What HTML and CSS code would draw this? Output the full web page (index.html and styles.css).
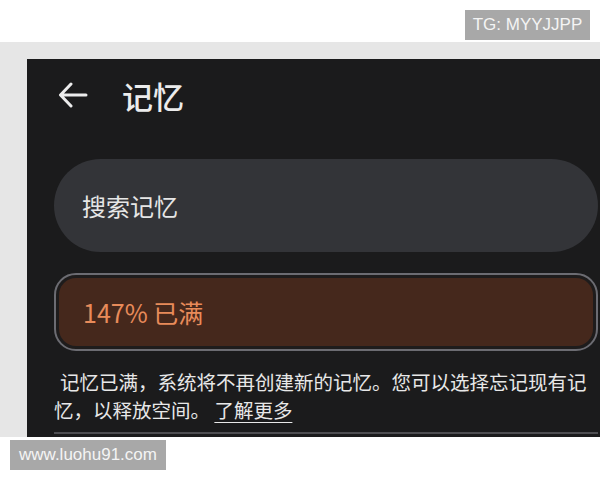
FILE: index.html
```html
<!DOCTYPE html>
<html lang="zh-CN">
<head>
    <meta charset="UTF-8">
    <meta name="viewport" content="width=device-width, initial-scale=1.0">
    <title>记忆</title>
    <link rel="stylesheet" href="styles.css">
</head>
<body>
    <div class="top-bar">
        <span class="tag">TG: MYYJJPP</span>
    </div>
    <div class="frame">
        <div class="screen">
            <div class="header">
                <svg class="back" width="30" height="26" viewBox="0 0 30 26">
                    <path d="M28 13H3M13 2L2.5 13L13 24" fill="none" stroke="#ececec" stroke-width="3" stroke-linecap="round" stroke-linejoin="round"/>
                </svg>
                <h1>记忆</h1>
            </div>
            <div class="search">搜索记忆</div>
            <div class="usage">
                <div class="usage-fill">147% 已满</div>
            </div>
            <p class="note">记忆已满，系统将不再创建新的记忆。您可以选择忘记现有记忆，以释放空间。 <a href="#">了解更多</a></p>
            <div class="divider"></div>
        </div>
    </div>
    <div class="bottom-bar">
        <span class="tag">www.luohu91.com</span>
    </div>
</body>
</html>
```

FILE: styles.css
```css
body {
    margin: 0;
    background: #fff;
    font-family: "Noto Sans CJK SC", "Noto Sans", sans-serif;
}
.top-bar {
    height: 42px;
    display: flex;
    justify-content: flex-end;
    align-items: center;
    padding-right: 10px;
}
.tag {
    background: #a8a8a8;
    color: #f4f4f4;
    font-family: "Liberation Sans", Arial, sans-serif;
    font-size: 17px;
    height: 30px;
    line-height: 30px;
    white-space: nowrap;
}
.top-bar .tag {
    margin-top: 8px;
    width: 125px;
    text-align: center;
}
.frame {
    background: #e6e6e6;
    padding: 17px 0 0 27px;
}
.screen {
    background: #1b1b1c;
    height: 378px;
    padding: 0 0 0 27px;
    box-sizing: border-box;
    overflow: hidden;
}
.header {
    height: 72px;
    display: flex;
    align-items: center;
}
.back {
    margin-left: 4px;
}
.header h1 {
    margin: 0 0 0 34px;
    color: #ececec;
    font-size: 31px;
    font-weight: 500;
}
.search {
    margin: 28px 2px 0 0;
    height: 93px;
    border-radius: 47px;
    background: #333438;
    color: #e6e6e6;
    font-size: 24px;
    display: flex;
    align-items: center;
    padding-left: 28px;
}
.usage {
    margin: 21px 2px 0 0;
    height: 78px;
    box-sizing: border-box;
    border: 2px solid #6c6c72;
    border-radius: 22px;
    padding: 3px;
    background: #1e1c1c;
}
.usage-fill {
    height: 100%;
    border-radius: 17px;
    background: #45281c;
    color: #e88b5a;
    font-size: 25px;
    display: flex;
    align-items: center;
    padding-left: 24px;
}
.note {
    margin: 17px 0 0;
    color: #e8e8e8;
    font-size: 19.5px;
    line-height: 28px;
    text-indent: 6px;
}
.note a {
    display: inline-block;
    text-indent: 0;
    color: #e8e8e8;
    text-decoration: underline;
    text-underline-offset: 4px;
}
.divider {
    margin: 8px 2px 0 0;
    height: 2px;
    background: #4e4e52;
}
.bottom-bar {
    padding: 3px 0 0 10px;
}
.bottom-bar .tag {
    display: inline-block;
    padding: 0 9px;
}
```
